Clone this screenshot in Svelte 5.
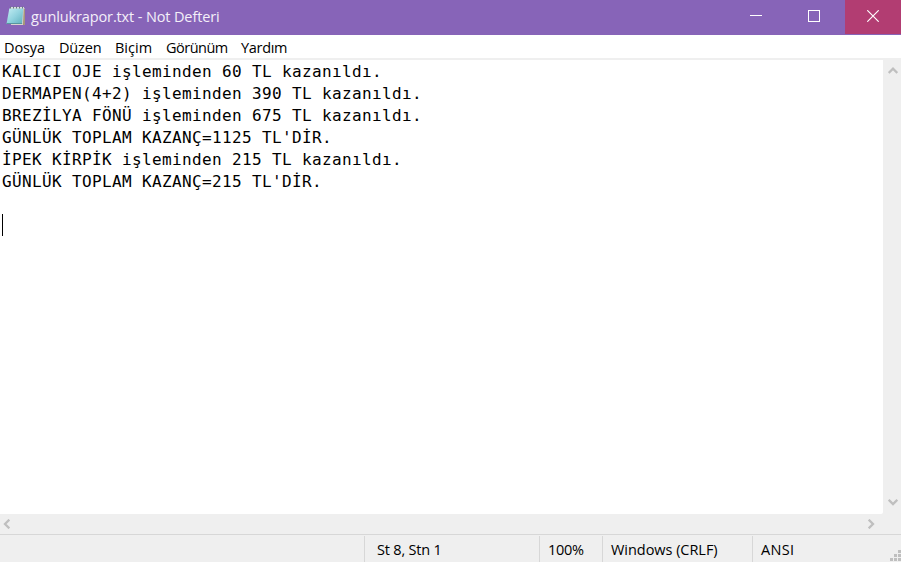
<script>
  const menus = [
    { label: 'Dosya', width: 55, spacing: -0.1 },
    { label: 'Düzen', width: 56, spacing: -0.15 },
    { label: 'Biçim', width: 51, spacing: 0 },
    { label: 'Görünüm', width: 75, spacing: -0.5 },
    { label: 'Yardım', width: 60, spacing: -0.3 },
  ];
  const lines = [
    'KALICI OJE işleminden 60 TL kazanıldı.',
    'DERMAPEN(4+2) işleminden 390 TL kazanıldı.',
    'BREZİLYA FÖNÜ işleminden 675 TL kazanıldı.',
    "GÜNLÜK TOPLAM KAZANÇ=1125 TL'DİR.",
    'İPEK KİRPİK işleminden 215 TL kazanıldı.',
    "GÜNLÜK TOPLAM KAZANÇ=215 TL'DİR.",
    '',
  ];
  const cells = [
    { label: 'St 8, Stn 1', width: 175, pad: 12, spacing: -0.2 },
    { label: '100%', width: 63, pad: 8, spacing: -0.25 },
    { label: 'Windows (CRLF)', width: 150, pad: 8, spacing: -0.04 },
    { label: 'ANSI', width: 149, pad: 8, spacing: 0.3 },
  ];
  const dots = [[8, 0], [4, 4], [8, 4], [0, 8], [4, 8], [8, 8]];
</script>

<div class="window">
  <header>
    <svg class="app" width="20" height="20" viewBox="0 0 20 20">
      <defs>
        <linearGradient id="page" x1="0" y1="0" x2="1" y2="1">
          <stop offset="0" stop-color="#c4edf3" />
          <stop offset="0.5" stop-color="#92d3df" />
          <stop offset="1" stop-color="#5fafbd" />
        </linearGradient>
      </defs>
      <path d="M4 2H18.5V19H5Z" fill="#d9d3cf" />
      <path d="M17.8 3H18.8V19H17Z" fill="#a3936f" />
      <path d="M3.3 2.5H17.3L16 18H.5Z" fill="url(#page)" />
      <path d="M.5 17.5H16.2" stroke="#58959f" />
      <path d="M4 1.5H18" stroke="#d8dfdf" />
      <path d="M4.5 .5v2M7.5 .5v2M10.5 .5v2M13.5 .5v2M16.5 .5v2" stroke="#697982" />
    </svg>
    <span class="title">gunlukrapor.txt - Not Defteri</span>
    <div class="controls">
      <button aria-label="Simge durumuna küçült">
        <svg width="12" height="12"><path d="M0 5.5H12" stroke="#fff" /></svg>
      </button>
      <button aria-label="Ekranı kapla">
        <svg width="12" height="12"><rect x=".5" y=".5" width="11" height="11" fill="none" stroke="#fff" /></svg>
      </button>
      <button class="close" aria-label="Kapat">
        <svg width="12" height="12"><path d="M.3 .3L11.7 11.7M11.7 .3L.3 11.7" stroke="#fff" stroke-width="1.15" /></svg>
      </button>
    </div>
  </header>

  <nav>
    {#each menus as m}
      <span style:width="{m.width}px" style:letter-spacing="{m.spacing}px">{m.label}</span>
    {/each}
  </nav>

  <main>
    <div class="text">
      {#each lines as line}
        <div class="line">{line}</div>
      {/each}
      <i class="caret"></i>
    </div>
    <div class="vscroll">
      <svg width="10" height="8"><path d="M.7 6L5 1.7L9.3 6" /></svg>
      <svg width="10" height="8"><path d="M.7 1.7L5 6L9.3 1.7" /></svg>
    </div>
  </main>

  <div class="hscroll">
    <svg width="8" height="10"><path d="M6.3 .7L2 5L6.3 9.3" /></svg>
    <svg width="8" height="10"><path d="M1.7 .7L6 5L1.7 9.3" /></svg>
  </div>

  <footer>
    {#each cells as c}
      <span
        class="cell"
        style:width="{c.width}px"
        style:padding-left="{c.pad}px"
        style:letter-spacing="{c.spacing}px">{c.label}</span>
    {/each}
    <svg class="grip" width="11" height="11">
      {#each dots as [x, y]}
        <rect {x} {y} width="3" height="3" fill="#bfbfbf" />
      {/each}
    </svg>
  </footer>
</div>

<style>
  .window {
    width: 901px;
    height: 562px;
    display: flex;
    flex-direction: column;
    overflow: hidden;
    background: #efefef;
    color: #000;
    font: 14.5px/20px 'Open Sans', 'Noto Sans', sans-serif;
  }
  svg {
    display: block;
  }
  header {
    height: 35px;
    flex: none;
    display: flex;
    background: #8764b8;
  }
  .app {
    margin: 6px 5px 0 6px;
  }
  .title {
    flex: 1;
    margin-top: 7px;
    color: #f4eff9;
    white-space: nowrap;
    letter-spacing: -0.13px;
  }
  .controls {
    display: flex;
  }
  button {
    width: 58px;
    height: 34px;
    padding: 0 4px 2px 0;
    margin: 0;
    border: 0;
    background: none;
    display: flex;
    align-items: center;
    justify-content: center;
  }
  .close {
    width: 56px;
    padding-right: 0;
    background: #b23d72;
  }
  nav {
    height: 23px;
    flex: none;
    display: flex;
    padding-left: 4px;
    background: #fff;
    border-bottom: 2px solid #efefef;
    line-height: 25px;
  }
  nav span {
    flex: none;
  }
  main {
    height: 454px;
    flex: none;
    display: flex;
  }
  .text {
    width: 881px;
    padding: 1px 0 0 2px;
    background: #fff;
    border-bottom-right-radius: 2px;
    font: 16px/22px 'DejaVu Sans Mono', monospace;
    letter-spacing: 0.367px;
  }
  .line {
    height: 22px;
    white-space: pre;
  }
  .caret {
    display: block;
    width: 1px;
    height: 22px;
    margin-top: -1px;
    background: #000;
  }
  .vscroll {
    width: 18px;
    display: flex;
    flex-direction: column;
    align-items: center;
    justify-content: space-between;
    padding: 7px 0 8px;
    box-sizing: border-box;
  }
  .vscroll svg {
    margin-left: 1px;
  }
  .vscroll path,
  .hscroll path {
    fill: none;
    stroke: #bfbfbf;
    stroke-width: 2.3;
  }
  .hscroll {
    height: 20px;
    flex: none;
    display: flex;
    align-items: center;
    justify-content: space-between;
    padding: 0 26px 1px 3px;
    box-sizing: border-box;
  }
  footer {
    height: 27px;
    flex: none;
    display: flex;
    justify-content: flex-end;
    align-items: flex-end;
    border-top: 1px solid #d7d7d7;
    position: relative;
  }
  .cell {
    height: 26px;
    line-height: 28px;
    box-sizing: border-box;
    border-left: 1px solid #d7d7d7;
    white-space: nowrap;
  }
  .grip {
    position: absolute;
    right: 0;
    bottom: 1px;
  }
</style>
